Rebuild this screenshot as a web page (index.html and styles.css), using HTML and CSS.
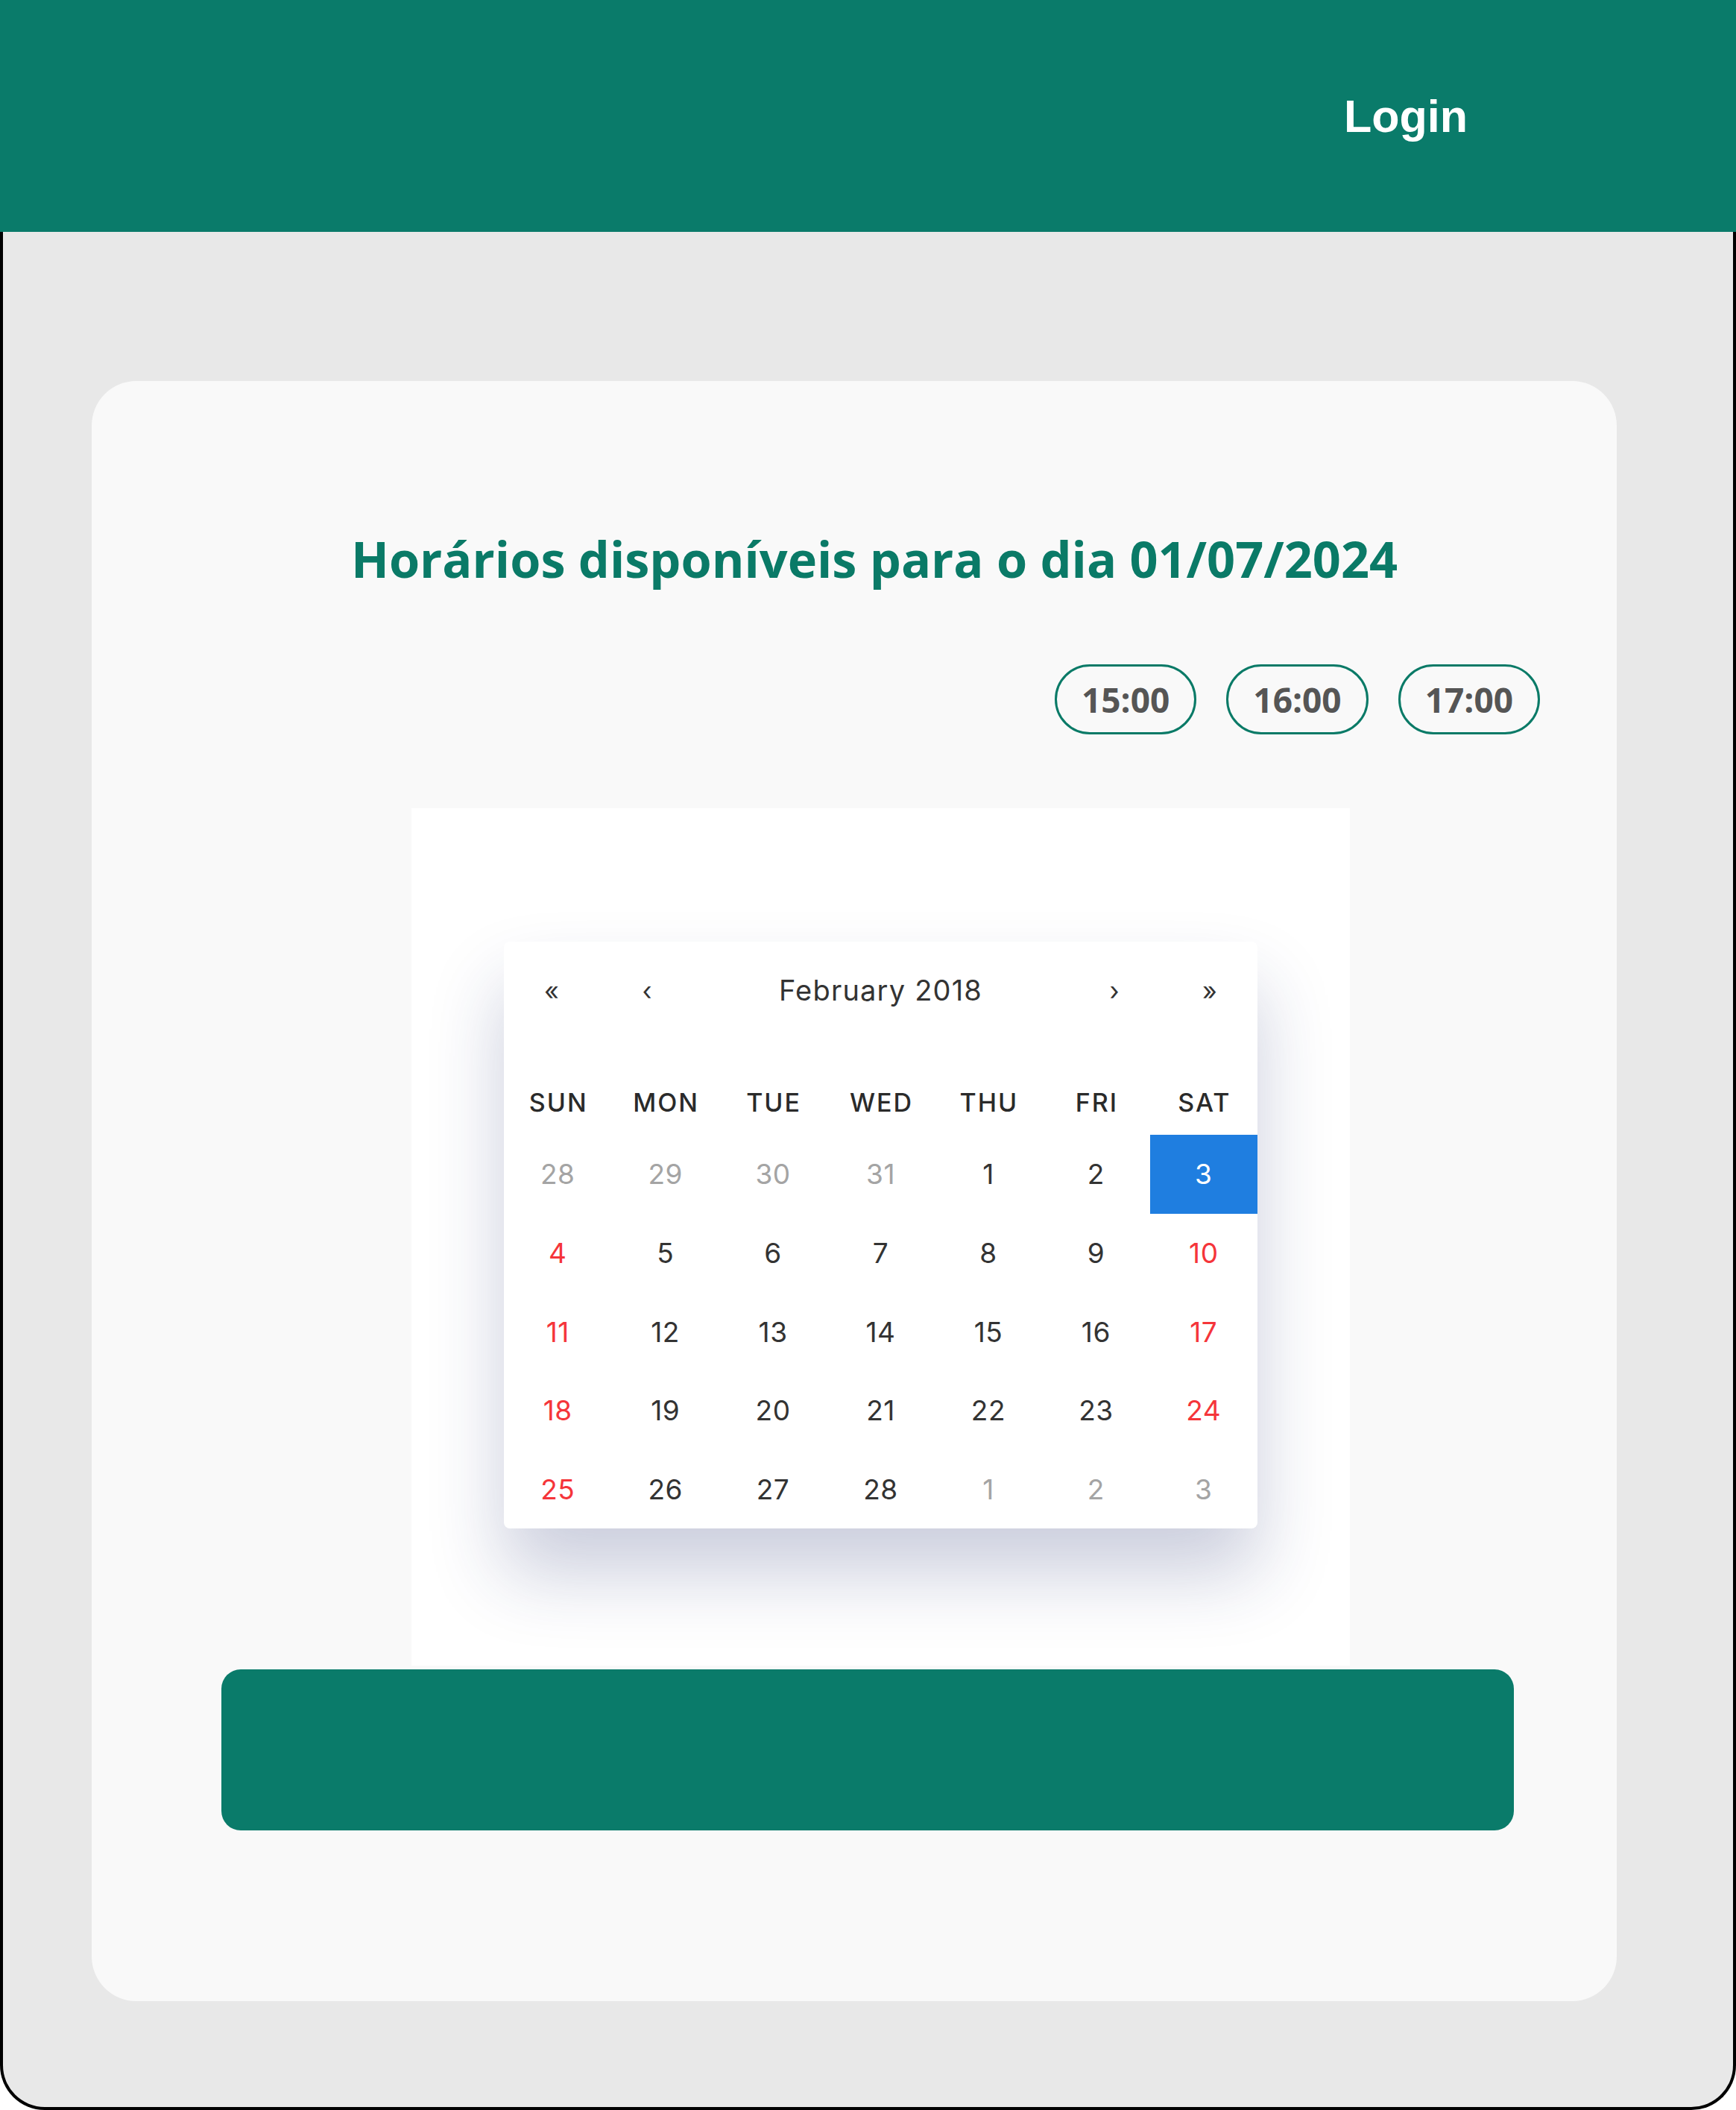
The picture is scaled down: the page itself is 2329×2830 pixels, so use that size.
FILE: index.html
```html
<!DOCTYPE html>
<html lang="pt-BR">
<head>
<meta charset="utf-8">
<title>Horários</title>
<link rel="stylesheet" href="styles.css">
</head>
<body>
<header class="topbar">
  <a class="login" href="#">Login</a>
</header>
<div class="frame">
  <main class="card">
    <h1 class="title">Horários disponíveis para o dia 01/07/2024</h1>
    <div class="slots">
      <button class="slot">15:00</button>
      <button class="slot">16:00</button>
      <button class="slot">17:00</button>
    </div>
    <div class="calendar-wrap">
      <div class="calendar">
        <div class="cal-nav">
          <button class="cal-btn">«</button>
          <button class="cal-btn">‹</button>
          <span class="cal-label">February 2018</span>
          <button class="cal-btn">›</button>
          <button class="cal-btn">»</button>
        </div>
        <div class="cal-weekdays">
          <span>SUN</span><span>MON</span><span>TUE</span><span>WED</span><span>THU</span><span>FRI</span><span>SAT</span>
        </div>
        <div class="cal-days">
          <span class="day other">28</span><span class="day other">29</span><span class="day other">30</span><span class="day other">31</span><span class="day">1</span><span class="day">2</span><span class="day selected">3</span>
          <span class="day weekend">4</span><span class="day">5</span><span class="day">6</span><span class="day">7</span><span class="day">8</span><span class="day">9</span><span class="day weekend">10</span>
          <span class="day weekend">11</span><span class="day">12</span><span class="day">13</span><span class="day">14</span><span class="day">15</span><span class="day">16</span><span class="day weekend">17</span>
          <span class="day weekend">18</span><span class="day">19</span><span class="day">20</span><span class="day">21</span><span class="day">22</span><span class="day">23</span><span class="day weekend">24</span>
          <span class="day weekend">25</span><span class="day">26</span><span class="day">27</span><span class="day">28</span><span class="day other">1</span><span class="day other">2</span><span class="day other">3</span>
        </div>
      </div>
    </div>
    <button class="confirm" aria-label="Confirmar"></button>
  </main>
</div>
</body>
</html>
```

FILE: styles.css
```css
* { box-sizing: border-box; }

html, body {
  margin: 0;
  padding: 0;
}

body {
  width: 2329px;
  height: 2830px;
  overflow: hidden;
  background: #ffffff;
  font-family: "Open Sans", "Noto Sans", sans-serif;
}

.topbar {
  height: 311px;
  background: #0a7b6a;
  display: flex;
  align-items: center;
  justify-content: flex-end;
  padding: 2px 360px 0 0;
}

.login {
  font-family: "Liberation Sans", Arial, sans-serif;
  font-weight: 700;
  font-size: 61px;
  line-height: 1;
  color: #ffffff;
  text-decoration: none;
}

.frame {
  height: 2519px;
  background: #e8e8e8;
  border: 4px solid #000000;
  border-top: 0;
  border-radius: 0 0 60px 60px;
  padding-top: 200px;
  padding-left: 119px;
}

.card {
  width: 2046px;
  height: 2173px;
  background: #f9f9f9;
  border-radius: 60px;
  padding-top: 199px;
  display: flex;
  flex-direction: column;
}

.title {
  margin: 0 0 0 54px;
  font-family: "Open Sans", "Noto Sans", sans-serif;
  font-weight: 700;
  font-size: 66.6px;
  line-height: 80px;
  text-align: center;
  color: #0a7a67;
}

.slots {
  margin-top: 101px;
  display: flex;
  justify-content: flex-end;
  gap: 40px;
  padding-right: 103px;
}

.slot {
  height: 94px;
  padding: 0 33px;
  border: 3px solid #0a7a67;
  border-radius: 47px;
  background: transparent;
  font-family: "Open Sans", "Noto Sans", sans-serif;
  font-weight: 700;
  font-size: 46px;
  line-height: 84px;
  color: #555555;
}

.calendar-wrap {
  margin: 99px 0 0 429px;
  width: 1259px;
  height: 1150px;
  background: #ffffff;
  display: flex;
  align-items: center;
  justify-content: center;
  overflow: hidden;
  padding-bottom: 5px;
}

.calendar {
  width: 1011px;
  background: #ffffff;
  border-radius: 8px;
  box-shadow: 0 60px 100px rgba(30, 45, 110, 0.23);
  font-family: "Inter", "Noto Sans", sans-serif;
  color: #2e2e2e;
}

.cal-nav {
  height: 130px;
  display: flex;
  align-items: center;
}

.cal-btn {
  width: 128px;
  height: 100%;
  border: 0;
  background: transparent;
  font-family: "Inter", "Noto Sans", sans-serif;
  font-size: 34px;
  color: #333333;
  padding: 0;
}

.cal-label {
  flex: 1;
  text-align: center;
  font-size: 38px;
  font-weight: 400;
  letter-spacing: 1.2px;
  color: #333333;
}

.cal-weekdays {
  display: grid;
  grid-template-columns: repeat(7, 1fr);
  padding-top: 43px;
  height: 129px;
  line-height: 86px;
  text-align: center;
  font-size: 34px;
  font-weight: 500;
  letter-spacing: 2px;
  color: #2a2a2a;
}

.cal-weekdays span {
  padding-left: 2px;
}

.cal-days {
  display: grid;
  grid-template-columns: repeat(7, 1fr);
  grid-auto-rows: 105.6px;
}

.day {
  display: flex;
  align-items: center;
  justify-content: center;
  font-size: 37px;
  font-weight: 400;
  letter-spacing: 0.5px;
  color: #333333;
}

.day.other { color: #a4a4a4; }
.day.weekend { color: #f5353a; }
.day.selected {
  background: #1f7ee0;
  color: #ffffff;
}

.confirm {
  margin: 5px 0 0 174px;
  width: 1734px;
  height: 216px;
  border: 0;
  border-radius: 26px;
  background: #0a7b6a;
}
```
